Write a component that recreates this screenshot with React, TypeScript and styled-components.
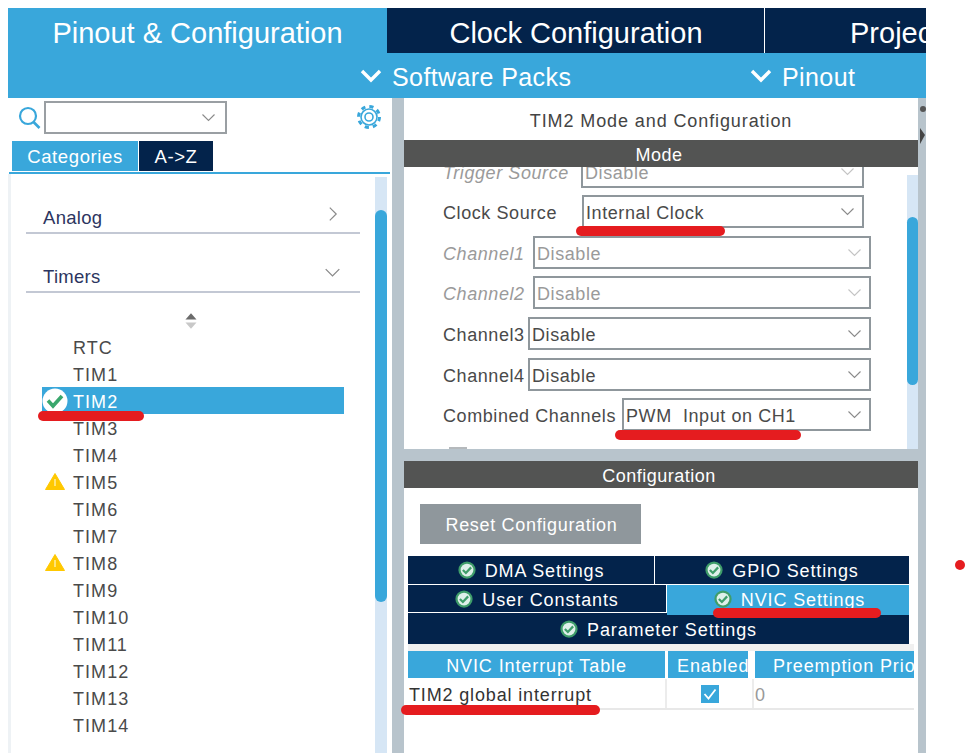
import React from "react";
import styled, { createGlobalStyle } from "styled-components";

const BLUE = "#39a7db";
const NAVY = "#03234b";
const BAR = "#535453";
const GUTTER = "#b8c4cc";
const TEXT = "#4a4a4a";

const GlobalStyle = createGlobalStyle`
  html, body {
    margin: 0;
    padding: 0;
    background: #fff;
    font-family: "Liberation Sans", Arial, sans-serif;
  }
`;

const Page = styled.div`
  position: relative;
  width: 966px;
  height: 753px;
  box-sizing: border-box;
  padding: 8px 40px 0 8px;
  overflow: hidden;
`;

const TopTabs = styled.div`
  display: flex;
  height: 45px;
  background: ${NAVY};
`;

const TopTab = styled.div<{ $width: number; $active?: boolean; $left?: number }>`
  width: ${(p) => p.$width}px;
  flex: none;
  box-sizing: border-box;
  display: flex;
  align-items: center;
  justify-content: ${(p) => (p.$left ? "flex-start" : "center")};
  padding: 5px 0 0 ${(p) => p.$left || 0}px;
  margin-right: 1px;
  overflow: hidden;
  white-space: nowrap;
  font-size: 29px;
  color: #fff;
  background: ${(p) => (p.$active ? BLUE : NAVY)};
  border-right: ${(p) => (p.$active ? "none" : "1px solid #fff")};
  &:last-child {
    border-right: none;
    margin-right: 0;
  }
`;

const SubBar = styled.div`
  height: 45px;
  box-sizing: border-box;
  display: flex;
  align-items: center;
  background: ${BLUE};
  color: #fff;
  font-size: 25px;
  padding: 4px 0 0 352px;
`;

const SubItem = styled.div<{ $width: number }>`
  width: ${(p) => p.$width}px;
  display: flex;
  align-items: center;
  gap: 10px;
  letter-spacing: 0.4px;
  svg {
    margin-top: -3px;
  }
`;

const Workspace = styled.div`
  display: flex;
  height: 655px;
  background: ${GUTTER};
  position: relative;
`;

const LeftPanel = styled.aside`
  width: 384px;
  flex: none;
  background: #fff;
  display: flex;
  flex-direction: column;
`;

const SearchRow = styled.div`
  height: 43px;
  box-sizing: border-box;
  display: flex;
  align-items: center;
  padding: 0 10px 5px 10px;
  flex: none;
`;

const Combo = styled.div`
  width: 183px;
  height: 33px;
  box-sizing: border-box;
  margin-left: 3px;
  border: 2px solid #9a9fa3;
  display: flex;
  align-items: center;
  justify-content: flex-end;
  padding-right: 9px;
`;

const GearSlot = styled.div`
  margin-left: auto;
  display: flex;
`;

const ModeTabs = styled.div`
  display: flex;
  height: 30px;
  padding-left: 4px;
  flex: none;
`;

const ModeTab = styled.div<{ $width: number; $active?: boolean }>`
  width: ${(p) => p.$width}px;
  box-sizing: border-box;
  padding-top: 2px;
  margin-right: 1px;
  display: flex;
  align-items: center;
  justify-content: center;
  color: #fff;
  font-size: 18.5px;
  letter-spacing: 0.6px;
  background: ${(p) => (p.$active ? BLUE : NAVY)};
`;

const TabLine = styled.div`
  height: 2px;
  margin: 1px 2px 0 1px;
  background: ${BLUE};
  flex: none;
`;

const TreeArea = styled.div`
  flex: 1;
  min-height: 0;
  display: flex;
  border-left: 3px solid #eef2f5;
`;

const Tree = styled.div`
  width: 364px;
  flex: none;
  padding-left: 15px;
  box-sizing: border-box;
`;

const Accordion = styled.div<{ $height: number }>`
  width: 334px;
  height: ${(p) => p.$height}px;
  box-sizing: border-box;
  border-bottom: 2px solid #c3c8d4;
  display: flex;
  align-items: flex-end;
  justify-content: space-between;
  padding: 0 19px 3px 17px;
  color: #2c3560;
  font-size: 18.5px;
  letter-spacing: 0.3px;
`;

const AccordionIcon = styled.div`
  display: flex;
  margin-bottom: 7px;
`;

const SortSlot = styled.div`
  width: 330px;
  height: 40px;
  display: flex;
  align-items: center;
  justify-content: center;
  padding-top: 15px;
  box-sizing: border-box;
`;

const TimerList = styled.ul`
  list-style: none;
  margin: 0 0 0 16px;
  padding: 0;
  width: 302px;
`;

const TimerRow = styled.li<{ $selected?: boolean }>`
  height: 27px;
  display: flex;
  align-items: center;
  font-size: 18px;
  letter-spacing: 1.05px;
  color: ${(p) => (p.$selected ? "#fff" : TEXT)};
  background: ${(p) => (p.$selected ? BLUE : "transparent")};
`;

const TimerName = styled.span`
  padding-top: 4px;
`;

const TimerIcon = styled.span`
  width: 26px;
  margin-right: 5px;
  flex: none;
  display: flex;
  justify-content: center;
`;

const Track = styled.div<{ $mt: number; $width: number; $thumbTop: number; $thumbHeight: number }>`
  width: ${(p) => p.$width}px;
  flex: none;
  margin-top: ${(p) => p.$mt}px;
  background: #d6e6f5;
  &::before {
    content: "";
    display: block;
    height: ${(p) => p.$thumbHeight}px;
    transform: translateY(${(p) => p.$thumbTop}px);
    border-radius: 6px;
    background: ${BLUE};
  }
`;

const RightPanel = styled.main`
  width: 514px;
  flex: none;
  margin-left: 12px;
  display: flex;
  flex-direction: column;
`;

const ModeSection = styled.section`
  height: 351px;
  flex: none;
  background: #fff;
  display: flex;
  flex-direction: column;
`;

const PanelTitle = styled.h1`
  margin: 0;
  height: 42px;
  flex: none;
  box-sizing: border-box;
  padding: 5px 0 0 0;
  display: flex;
  align-items: center;
  justify-content: center;
  font-weight: 400;
  font-size: 18px;
  letter-spacing: 0.9px;
  color: #444;
`;

const SectionBar = styled.div`
  height: 27px;
  flex: none;
  box-sizing: border-box;
  padding: 3px 4px 0 0;
  display: flex;
  align-items: center;
  justify-content: center;
  background: ${BAR};
  color: #fff;
  font-size: 18px;
  letter-spacing: 0.5px;
`;

const ModeBody = styled.div`
  flex: 1;
  min-height: 0;
  display: flex;
  justify-content: space-between;
  overflow: hidden;
`;

const ModeRows = styled.div`
  padding: 0 0 0 39px;
  margin-top: -12.4px;
  display: flex;
  flex-direction: column;
  gap: 7.6px;
  width: 467px;
  box-sizing: border-box;
`;

const ModeRow = styled.div<{ $inset?: number }>`
  display: flex;
  align-items: center;
  height: 33px;
  flex: none;
  padding-right: ${(p) => p.$inset || 0}px;
  font-size: 18px;
  color: ${TEXT};
  letter-spacing: 0.58px;
`;

const RowLabel = styled.div<{ $width: number; $off?: boolean }>`
  width: ${(p) => p.$width}px;
  flex: none;
  white-space: nowrap;
  padding-top: 4px;
  font-style: ${(p) => (p.$off ? "italic" : "normal")};
  color: ${(p) => (p.$off ? "#9a9a9a" : TEXT)};
`;

const Select = styled.div<{ $off?: boolean }>`
  flex: 1;
  height: 33px;
  box-sizing: border-box;
  border: 2px solid #8f979c;
  display: flex;
  align-items: center;
  justify-content: space-between;
  padding: 0 7px 0 2px;
  color: ${(p) => (p.$off ? "#9a9a9a" : TEXT)};
`;

const SelectValue = styled.span`
  white-space: pre;
  padding-top: 4px;
`;

const HiddenCheck = styled.div`
  width: 18px;
  height: 18px;
  margin-left: 6px;
  margin-top: 8px;
  flex: none;
  border: 2px solid #b5b9bc;
  box-sizing: border-box;
`;

const ConfigSection = styled.section`
  margin-top: 12px;
  flex: 1;
  min-height: 0;
  background: #fff;
  display: flex;
  flex-direction: column;
`;

const ResetButton = styled.button`
  margin: 16px 0 12px 16px;
  width: 221px;
  height: 40px;
  flex: none;
  border: none;
  padding: 2px 0 0 2px;
  background: #8f979c;
  color: #fff;
  font-family: inherit;
  font-size: 18px;
  letter-spacing: 0.68px;
`;

const ConfigTabs = styled.div`
  margin-left: 4px;
  width: 501px;
  display: flex;
  flex-direction: column;
  gap: 1px;
  flex: none;
`;

const ConfigTabRow = styled.div<{ $height: number }>`
  display: flex;
  gap: 1px;
  height: ${(p) => p.$height}px;
`;

const ConfigTab = styled.div<{ $grow?: number; $active?: boolean }>`
  width: ${(p) => (p.$grow ? `${p.$grow}px` : "auto")};
  flex: ${(p) => (p.$grow ? "none" : "1")};
  height: ${(p) => (p.$active ? "30px" : "100%")};
  position: relative;
  z-index: ${(p) => (p.$active ? 1 : 0)};
  display: flex;
  align-items: center;
  justify-content: center;
  gap: 9px;
  padding: 0 0 ${(p) => (p.$active ? "3px" : "0")} ${(p) => (p.$active ? "3px" : "0")};
  box-sizing: border-box;
  background: ${(p) => (p.$active ? BLUE : NAVY)};
  color: #fff;
  font-size: 18px;
  letter-spacing: 0.88px;
`;

const ConfigTabText = styled.span`
  padding-top: 3px;
`;

const TableWrap = styled.div`
  margin-left: 4px;
  width: 506px;
  padding-top: 7px;
  background: linear-gradient(#f0f0f0 7px, #fff 7px);
  flex: none;
`;

const TableHead = styled.div`
  display: grid;
  grid-template-columns: 257px 80px 163px;
  column-gap: 3px;
  height: 27px;
`;

const HeadCell = styled.div<{ $gap?: number; $start?: number }>`
  display: flex;
  align-items: center;
  justify-content: ${(p) => (p.$start ? "flex-start" : "center")};
  box-sizing: border-box;
  padding: 4px 0 0 ${(p) => p.$start || 0}px;
  overflow: hidden;
  white-space: nowrap;
  background: ${BLUE};
  color: #fff;
  font-size: 18px;
  letter-spacing: 0.9px;
  margin-left: ${(p) => p.$gap || 0}px;
`;

const TableRow = styled.div`
  display: grid;
  grid-template-columns: 259px 87px 160px;
  height: 31px;
  margin-top: 1px;
  border-bottom: 2px solid #e8e8e8;
  box-sizing: border-box;
  font-size: 18px;
  letter-spacing: 0.85px;
  color: #333;
`;

const BodyCell = styled.div<{ $center?: boolean; $muted?: boolean }>`
  display: flex;
  align-items: center;
  justify-content: ${(p) => (p.$center ? "center" : "flex-start")};
  padding: ${(p) => (p.$center ? "0" : "4px 0 0 1px")};
  border-right: 2px solid #ececec;
  color: ${(p) => (p.$muted ? "#999" : "inherit")};
  &:last-child {
    border-right: none;
  }
`;

const Tick = styled.div`
  width: 18px;
  height: 18px;
  background: ${BLUE};
  display: flex;
  align-items: center;
  justify-content: center;
`;

const Mark = styled.div<{ $x: number; $y: number; $w: number }>`
  position: absolute;
  left: ${(p) => p.$x}px;
  top: ${(p) => p.$y}px;
  width: ${(p) => p.$w}px;
  height: 10px;
  border-radius: 5px;
  background: #e51c1f;
  z-index: 5;
`;

const Dot = styled.div`
  position: absolute;
  left: 955px;
  top: 560px;
  width: 10px;
  height: 10px;
  border-radius: 50%;
  background: #e51c1f;
`;

const Handle = styled.div`
  position: absolute;
  right: 0;
  top: 8px;
  width: 7px;
  height: 40px;
`;

const Chevron = ({
  dir = "down",
  size = 20,
  color = "#8a8a8a",
  width = 1.5,
}: {
  dir?: "down" | "right";
  size?: number;
  color?: string;
  width?: number;
}) => (
  <svg width={size} height={size} viewBox="0 0 20 20" fill="none">
    <path
      d={dir === "down" ? "M2 6 L10 14 L18 6" : "M6 2 L14 10 L6 18"}
      stroke={color}
      strokeWidth={width}
    />
  </svg>
);

const WhiteChevron = () => (
  <svg width="22" height="14" viewBox="0 0 22 14" fill="none">
    <path d="M2 2 L11 11 L20 2" stroke="#fff" strokeWidth="3.4" />
  </svg>
);

const SearchIcon = () => (
  <svg width="23" height="25" viewBox="0 0 23 25" fill="none" stroke={BLUE}>
    <circle cx="10" cy="11" r="8" strokeWidth="2.2" />
    <path d="M15.5 17 L21.5 23" strokeWidth="2.6" />
  </svg>
);

const GearIcon = () => (
  <svg width="26" height="26" viewBox="0 0 26 26" fill="none" stroke={BLUE}>
    <circle cx="13" cy="13" r="4" strokeWidth="1.6" />
    <circle cx="13" cy="13" r="8" strokeWidth="1.6" />
    <circle cx="13" cy="13" r="10.5" strokeWidth="3" strokeDasharray="4.2 4.05" />
  </svg>
);

const SortIcon = () => (
  <svg width="12" height="16" viewBox="0 0 13 17">
    <path d="M6.5 0 L12.5 7 H0.5 Z" fill="#6b6b6b" />
    <path d="M6.5 17 L12.5 10 H0.5 Z" fill="#c8c8c8" />
  </svg>
);

const StatusIcon = () => (
  <svg width="18" height="18" viewBox="0 0 24 24">
    <circle cx="12" cy="12" r="11.5" fill="#3f9d6a" />
    <circle cx="12" cy="12" r="8.5" fill="#dff0ea" />
    <path d="M6.5 12 L10.5 16 L17.5 8.5" fill="none" stroke="#3f9d6a" strokeWidth="3" />
  </svg>
);

const BigStatusIcon = () => (
  <svg width="26" height="26" viewBox="0 0 26 26">
    <circle cx="13" cy="13" r="12.5" fill="#fff" />
    <path d="M6 12.5 L11 18 L20 8" fill="none" stroke="#3aa76d" strokeWidth="3.6" />
  </svg>
);

const WarningIcon = () => (
  <svg width="20" height="17" viewBox="0 0 20 17">
    <path d="M10 0.5 L19.5 16.5 H0.5 Z" fill="#ffc800" stroke="#ffc800" strokeLinejoin="round" />
    <path d="M10 6 V13" stroke="#fff5c8" strokeWidth="1.2" />
  </svg>
);

const timers = [
  "RTC", "TIM1", "TIM2", "TIM3", "TIM4", "TIM5", "TIM6", "TIM7",
  "TIM8", "TIM9", "TIM10", "TIM11", "TIM12", "TIM13", "TIM14",
];
const warned = ["TIM5", "TIM8"];

const channels = [
  { label: "Clock Source", labelWidth: 139, value: "Internal Clock", inset: 7 },
  { label: "Channel1", labelWidth: 90, value: "Disable", off: true },
  { label: "Channel2", labelWidth: 90, value: "Disable", off: true },
  { label: "Channel3", labelWidth: 85, value: "Disable" },
  { label: "Channel4", labelWidth: 85, value: "Disable" },
  { label: "Combined Channels", labelWidth: 179, value: "PWM  Input on CH1" },
];

function App() {
  return (
    <Page>
      <GlobalStyle />
      <TopTabs>
        <TopTab $width={379} $active>Pinout &amp; Configuration</TopTab>
        <TopTab $width={377}>Clock Configuration</TopTab>
        <TopTab $width={160} $left={84}>Project Manager</TopTab>
      </TopTabs>
      <SubBar>
        <SubItem $width={390}><WhiteChevron />Software Packs</SubItem>
        <SubItem $width={120}><WhiteChevron />Pinout</SubItem>
      </SubBar>
      <Workspace>
        <LeftPanel>
          <SearchRow>
            <SearchIcon />
            <Combo><Chevron size={15} /></Combo>
            <GearSlot><GearIcon /></GearSlot>
          </SearchRow>
          <ModeTabs>
            <ModeTab $width={126} $active>Categories</ModeTab>
            <ModeTab $width={74}>A-&gt;Z</ModeTab>
          </ModeTabs>
          <TabLine />
          <TreeArea>
            <Tree>
              <Accordion $height={60}>
                Analog
                <AccordionIcon><Chevron dir="right" size={16} /></AccordionIcon>
              </Accordion>
              <Accordion $height={59}>
                Timers
                <AccordionIcon><Chevron size={17} /></AccordionIcon>
              </Accordion>
              <SortSlot><SortIcon /></SortSlot>
              <TimerList>
                {timers.map((name) => (
                  <TimerRow key={name} $selected={name === "TIM2"}>
                    <TimerIcon>
                      {name === "TIM2" && <BigStatusIcon />}
                      {warned.includes(name) && <WarningIcon />}
                    </TimerIcon>
                    <TimerName>{name}</TimerName>
                  </TimerRow>
                ))}
              </TimerList>
            </Tree>
            <Track $mt={3} $width={12} $thumbTop={33} $thumbHeight={392} />
          </TreeArea>
        </LeftPanel>

        <RightPanel>
          <ModeSection>
            <PanelTitle>TIM2 Mode and Configuration</PanelTitle>
            <SectionBar>Mode</SectionBar>
            <ModeBody>
              <ModeRows>
                <ModeRow $inset={7}>
                  <RowLabel $width={138} $off>Trigger Source</RowLabel>
                  <Select $off>
                    <SelectValue>Disable</SelectValue>
                    <Chevron size={15} color="#c4c4c4" />
                  </Select>
                </ModeRow>
                {channels.map((row) => (
                  <ModeRow key={row.label} $inset={row.inset}>
                    <RowLabel $width={row.labelWidth} $off={row.off}>{row.label}</RowLabel>
                    <Select $off={row.off}>
                      <SelectValue>{row.value}</SelectValue>
                      <Chevron size={15} color={row.off ? "#c4c4c4" : "#8a8a8a"} />
                    </Select>
                  </ModeRow>
                ))}
                <HiddenCheck />
              </ModeRows>
              <Track $mt={8} $width={11} $thumbTop={42} $thumbHeight={168} />
            </ModeBody>
          </ModeSection>

          <ConfigSection>
            <SectionBar>Configuration</SectionBar>
            <ResetButton>Reset Configuration</ResetButton>
            <ConfigTabs>
              <ConfigTabRow $height={28}>
                <ConfigTab $grow={246}><StatusIcon /><ConfigTabText>DMA Settings</ConfigTabText></ConfigTab>
                <ConfigTab><StatusIcon /><ConfigTabText>GPIO Settings</ConfigTabText></ConfigTab>
              </ConfigTabRow>
              <ConfigTabRow $height={27}>
                <ConfigTab $grow={258}><StatusIcon /><ConfigTabText>User Constants</ConfigTabText></ConfigTab>
                <ConfigTab $active><StatusIcon /><ConfigTabText>NVIC Settings</ConfigTabText></ConfigTab>
              </ConfigTabRow>
              <ConfigTabRow $height={31}>
                <ConfigTab><StatusIcon /><ConfigTabText>Parameter Settings</ConfigTabText></ConfigTab>
              </ConfigTabRow>
            </ConfigTabs>
            <TableWrap>
              <TableHead>
                <HeadCell>NVIC Interrupt Table</HeadCell>
                <HeadCell $start={9}>Enabled</HeadCell>
                <HeadCell $gap={4} $start={18}>Preemption Priority</HeadCell>
              </TableHead>
              <TableRow>
                <BodyCell>TIM2 global interrupt</BodyCell>
                <BodyCell $center>
                  <Tick>
                    <svg width="14" height="12" viewBox="0 0 14 12" fill="none">
                      <path d="M1.5 6 L5.5 10.5 L12.5 1.5" stroke="#fff" strokeWidth="1.8" />
                    </svg>
                  </Tick>
                </BodyCell>
                <BodyCell $muted>0</BodyCell>
              </TableRow>
            </TableWrap>
          </ConfigSection>
        </RightPanel>

        <Handle>
          <svg width="7" height="40" viewBox="0 0 7 40">
            <circle cx="4" cy="3" r="3" fill="#555" />
            <path d="M1 22 L6 29 L1 38 Z" fill="#444" />
          </svg>
        </Handle>
      </Workspace>

      <Mark $x={38} $y={411} $w={106} />
      <Mark $x={576} $y={226} $w={149} />
      <Mark $x={615} $y={430} $w={186} />
      <Mark $x={713} $y={608} $w={168} />
      <Mark $x={401} $y={705} $w={199} />
      <Dot />
    </Page>
  );
}

export default App;
